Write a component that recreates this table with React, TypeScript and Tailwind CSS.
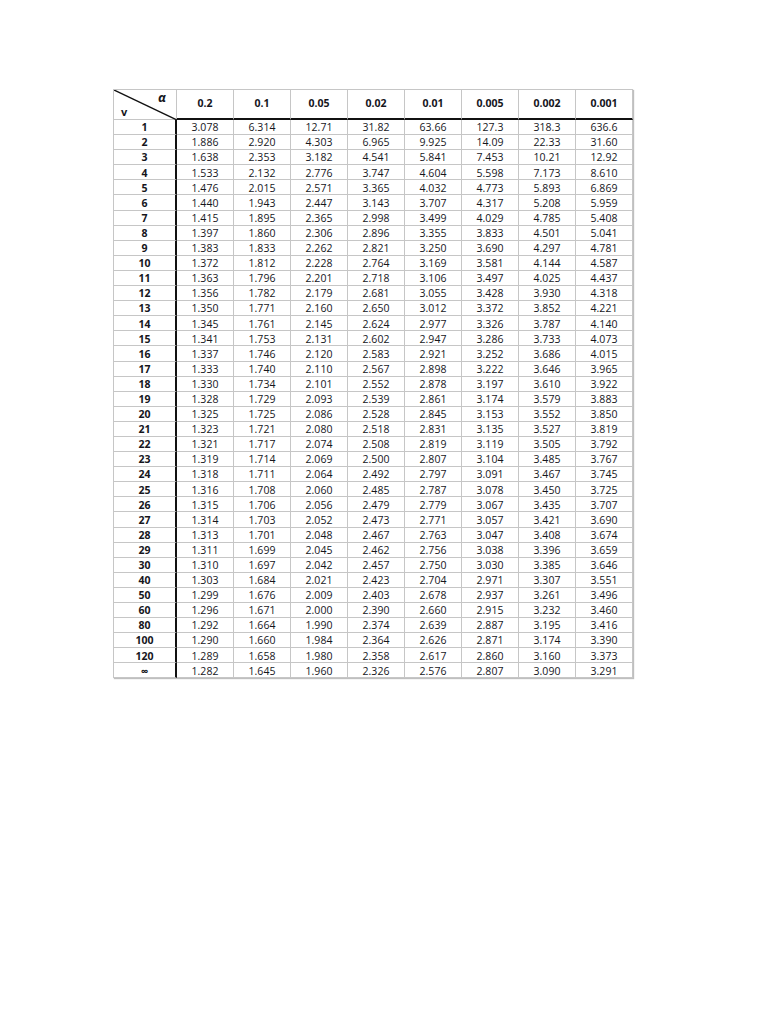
import React from "react";

const heads = ["0.2", "0.1", "0.05", "0.02", "0.01", "0.005", "0.002", "0.001"];

const rows: [string, string[]][] = [
  ["1", ["3.078", "6.314", "12.71", "31.82", "63.66", "127.3", "318.3", "636.6"]],
  ["2", ["1.886", "2.920", "4.303", "6.965", "9.925", "14.09", "22.33", "31.60"]],
  ["3", ["1.638", "2.353", "3.182", "4.541", "5.841", "7.453", "10.21", "12.92"]],
  ["4", ["1.533", "2.132", "2.776", "3.747", "4.604", "5.598", "7.173", "8.610"]],
  ["5", ["1.476", "2.015", "2.571", "3.365", "4.032", "4.773", "5.893", "6.869"]],
  ["6", ["1.440", "1.943", "2.447", "3.143", "3.707", "4.317", "5.208", "5.959"]],
  ["7", ["1.415", "1.895", "2.365", "2.998", "3.499", "4.029", "4.785", "5.408"]],
  ["8", ["1.397", "1.860", "2.306", "2.896", "3.355", "3.833", "4.501", "5.041"]],
  ["9", ["1.383", "1.833", "2.262", "2.821", "3.250", "3.690", "4.297", "4.781"]],
  ["10", ["1.372", "1.812", "2.228", "2.764", "3.169", "3.581", "4.144", "4.587"]],
  ["11", ["1.363", "1.796", "2.201", "2.718", "3.106", "3.497", "4.025", "4.437"]],
  ["12", ["1.356", "1.782", "2.179", "2.681", "3.055", "3.428", "3.930", "4.318"]],
  ["13", ["1.350", "1.771", "2.160", "2.650", "3.012", "3.372", "3.852", "4.221"]],
  ["14", ["1.345", "1.761", "2.145", "2.624", "2.977", "3.326", "3.787", "4.140"]],
  ["15", ["1.341", "1.753", "2.131", "2.602", "2.947", "3.286", "3.733", "4.073"]],
  ["16", ["1.337", "1.746", "2.120", "2.583", "2.921", "3.252", "3.686", "4.015"]],
  ["17", ["1.333", "1.740", "2.110", "2.567", "2.898", "3.222", "3.646", "3.965"]],
  ["18", ["1.330", "1.734", "2.101", "2.552", "2.878", "3.197", "3.610", "3.922"]],
  ["19", ["1.328", "1.729", "2.093", "2.539", "2.861", "3.174", "3.579", "3.883"]],
  ["20", ["1.325", "1.725", "2.086", "2.528", "2.845", "3.153", "3.552", "3.850"]],
  ["21", ["1.323", "1.721", "2.080", "2.518", "2.831", "3.135", "3.527", "3.819"]],
  ["22", ["1.321", "1.717", "2.074", "2.508", "2.819", "3.119", "3.505", "3.792"]],
  ["23", ["1.319", "1.714", "2.069", "2.500", "2.807", "3.104", "3.485", "3.767"]],
  ["24", ["1.318", "1.711", "2.064", "2.492", "2.797", "3.091", "3.467", "3.745"]],
  ["25", ["1.316", "1.708", "2.060", "2.485", "2.787", "3.078", "3.450", "3.725"]],
  ["26", ["1.315", "1.706", "2.056", "2.479", "2.779", "3.067", "3.435", "3.707"]],
  ["27", ["1.314", "1.703", "2.052", "2.473", "2.771", "3.057", "3.421", "3.690"]],
  ["28", ["1.313", "1.701", "2.048", "2.467", "2.763", "3.047", "3.408", "3.674"]],
  ["29", ["1.311", "1.699", "2.045", "2.462", "2.756", "3.038", "3.396", "3.659"]],
  ["30", ["1.310", "1.697", "2.042", "2.457", "2.750", "3.030", "3.385", "3.646"]],
  ["40", ["1.303", "1.684", "2.021", "2.423", "2.704", "2.971", "3.307", "3.551"]],
  ["50", ["1.299", "1.676", "2.009", "2.403", "2.678", "2.937", "3.261", "3.496"]],
  ["60", ["1.296", "1.671", "2.000", "2.390", "2.660", "2.915", "3.232", "3.460"]],
  ["80", ["1.292", "1.664", "1.990", "2.374", "2.639", "2.887", "3.195", "3.416"]],
  ["100", ["1.290", "1.660", "1.984", "2.364", "2.626", "2.871", "3.174", "3.390"]],
  ["120", ["1.289", "1.658", "1.980", "2.358", "2.617", "2.860", "3.160", "3.373"]],
  ["∞", ["1.282", "1.645", "1.960", "2.326", "2.576", "2.807", "3.090", "3.291"]],
];

export default function App() {
  return (
    <div
      className="w-[768px] h-[1024px] bg-white pt-[89px] pl-[113px] text-[#16161c]"
      style={{ fontFamily: "'Open Sans', 'Liberation Sans', sans-serif" }}
    >
      <div className="w-[520px] shadow-[1px_1px_1px_rgba(0,0,0,0.25)]">
        {/* header */}
        <div className="flex h-[31px]">
          <div className="relative w-[64px] h-full border-l border-t border-r border-b border-[#c6c6c6]">
            <svg className="absolute inset-0" width="63" height="30" viewBox="0 0 63 30">
              <line x1="0" y1="0" x2="63" y2="30" stroke="#111" strokeWidth="1.4" />
            </svg>
            <span className="absolute right-[10px] top-[1px] text-[13px] font-bold italic leading-none">α</span>
            <span className="absolute left-[7px] bottom-[2px] text-[11px] font-bold leading-none">v</span>
          </div>
          {heads.map((h) => (
            <div
              key={h}
              className="w-[57px] h-full flex items-center justify-center border-t border-r border-[#c6c6c6] border-b-2 border-b-[#111] text-[10.5px] font-bold"
            >
              {h}
            </div>
          ))}
        </div>
        {rows.map(([v, vals]) => (
          <div key={v} className="flex h-[15.1px] leading-none">
            <div className="w-[64px] h-full flex items-center justify-center border-l border-b border-[#c6c6c6] border-r-2 border-r-[#111] text-[10.5px] font-bold pt-px">
              {v}
            </div>
            {vals.map((x, i) => (
              <div
                key={i}
                className="w-[57px] h-full flex items-center justify-center border-r border-b border-[#c6c6c6] text-[10.5px] font-medium pt-px"
              >
                {x}
              </div>
            ))}
          </div>
        ))}
      </div>
    </div>
  );
}
